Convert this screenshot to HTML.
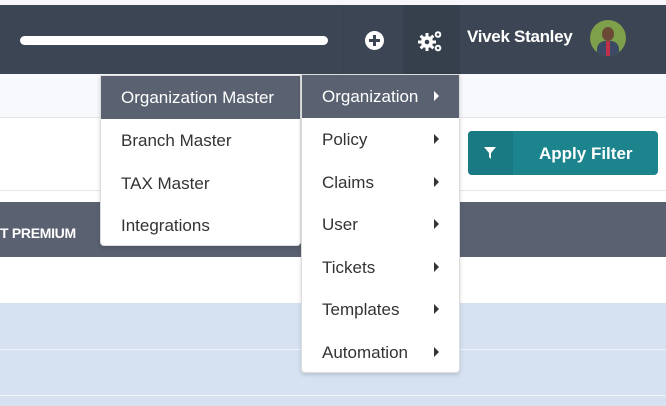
<!DOCTYPE html>
<html><head><style>
*{margin:0;padding:0;box-sizing:border-box}
body{width:666px;height:406px;overflow:hidden;background:#fff;font-family:"Liberation Sans",sans-serif;position:relative}
.a{position:absolute}
.mi{position:absolute;left:0;right:0;height:43px;line-height:43px;font-size:17px;color:#333;padding-left:20px}
.tri{position:absolute;right:20px;top:16px;width:0;height:0;border-left:5px solid #333;border-top:5px solid transparent;border-bottom:5px solid transparent}
</style></head><body>
<div class="a" style="left:0;top:0;width:666px;height:5px;background:#f6f6fb"></div>
<div class="a" style="left:0;top:5px;width:666px;height:69px;background:#3b4553"></div>
<div class="a" style="left:343px;top:5px;width:1px;height:69px;background:#38414f"></div>
<div class="a" style="left:403px;top:5px;width:57px;height:69px;background:#363f4c"></div>
<div class="a" style="left:20px;top:36px;width:308px;height:9px;border-radius:5px;background:#fff"></div>
<div class="a" style="left:365px;top:31px;width:19px;height:19px;border-radius:50%;background:#fff"></div>
<div class="a" style="left:373px;top:35px;width:3px;height:11px;background:#3b4553"></div>
<div class="a" style="left:369px;top:39px;width:11px;height:3px;background:#3b4553"></div>
<svg class="a" style="left:418px;top:29px" width="26" height="24" viewBox="0 0 26 24">
<g fill="#fff"><circle cx="9" cy="13" r="6"/>
<rect x="7.5" y="4" width="3" height="18"/><rect x="0" y="11.5" width="18" height="3"/>
<rect x="7.5" y="4" width="3" height="18" transform="rotate(45 9 13)"/><rect x="7.5" y="4" width="3" height="18" transform="rotate(-45 9 13)"/>
<circle cx="20" cy="5.5" r="3.3"/><circle cx="20" cy="19" r="3.3"/></g>
<g fill="#363f4c"><circle cx="9" cy="13" r="2.3"/><circle cx="20" cy="5.5" r="1.3"/><circle cx="20" cy="19" r="1.3"/></g></svg>
<div class="a" style="left:467px;top:27px;color:#fff;font-weight:bold;font-size:17px;letter-spacing:-0.3px">Vivek Stanley</div>
<div class="a" style="left:590px;top:20px;width:36px;height:36px;border-radius:50%;overflow:hidden;background:#7fa04a">
<div class="a" style="left:7px;top:21px;width:22px;height:20px;border-radius:8px 8px 0 0;background:#3d4a66"></div>
<div class="a" style="left:16px;top:21px;width:4px;height:15px;background:#c0304a"></div>
<div class="a" style="left:12px;top:7px;width:12px;height:14px;border-radius:50%;background:#6b4a35"></div>
</div>
<div class="a" style="left:0;top:74px;width:666px;height:44px;background:#f8f9fd;border-bottom:1px solid #e6e8ee"></div>
<div class="a" style="left:0;top:190px;width:666px;height:1px;background:#e6e8ee"></div>
<div class="a" style="left:0;top:202px;width:666px;height:55px;background:#5a6170"></div>
<div class="a" style="left:0;top:225px;color:#fff;font-weight:bold;font-size:14px;letter-spacing:-0.3px">T PREMIUM</div>
<div class="a" style="left:0;top:303px;width:666px;height:103px;background:#d6e2f2"></div>
<div class="a" style="left:0;top:349px;width:666px;height:1px;background:#eef3fa"></div>
<div class="a" style="left:0;top:395px;width:666px;height:1px;background:#eef3fa"></div>
<div class="a" style="left:468px;top:131px;width:190px;height:44px;border-radius:4px;background:#1c848d"></div>
<div class="a" style="left:468px;top:131px;width:45px;height:44px;border-radius:4px 0 0 4px;background:#1a7a83"></div>
<svg class="a" style="left:484px;top:147px" width="12" height="12" viewBox="0 0 12 12"><path d="M0 0H12L7 6V12L5 10V6Z" fill="#fff"/></svg>
<div class="a" style="left:539px;top:144px;color:#fff;font-weight:bold;font-size:17px">Apply Filter</div>
<div class="a" style="left:100px;top:75px;width:201px;height:171px;background:#fff;border:1px solid #ddd;border-radius:0 0 4px 4px;box-shadow:0 2px 4px rgba(0,0,0,.15)">
<div class="mi" style="top:0;background:#5a6170;color:#fff">Organization Master</div>
<div class="mi" style="top:43px">Branch Master</div>
<div class="mi" style="top:86px">TAX Master</div>
<div class="mi" style="top:128px">Integrations</div>
</div>
<div class="a" style="left:301px;top:74px;width:159px;height:299px;background:#fff;border:1px solid #ddd;border-radius:0 0 4px 4px;box-shadow:0 2px 4px rgba(0,0,0,.15)">
<div class="mi" style="top:0;background:#5a6170;color:#fff">Organization<span class="tri" style="border-left-color:#fff"></span></div>
<div class="mi" style="top:43px">Policy<span class="tri"></span></div>
<div class="mi" style="top:86px">Claims<span class="tri"></span></div>
<div class="mi" style="top:128px">User<span class="tri"></span></div>
<div class="mi" style="top:171px">Tickets<span class="tri"></span></div>
<div class="mi" style="top:213px">Templates<span class="tri"></span></div>
<div class="mi" style="top:256px">Automation<span class="tri"></span></div>
</div>
</body></html>
